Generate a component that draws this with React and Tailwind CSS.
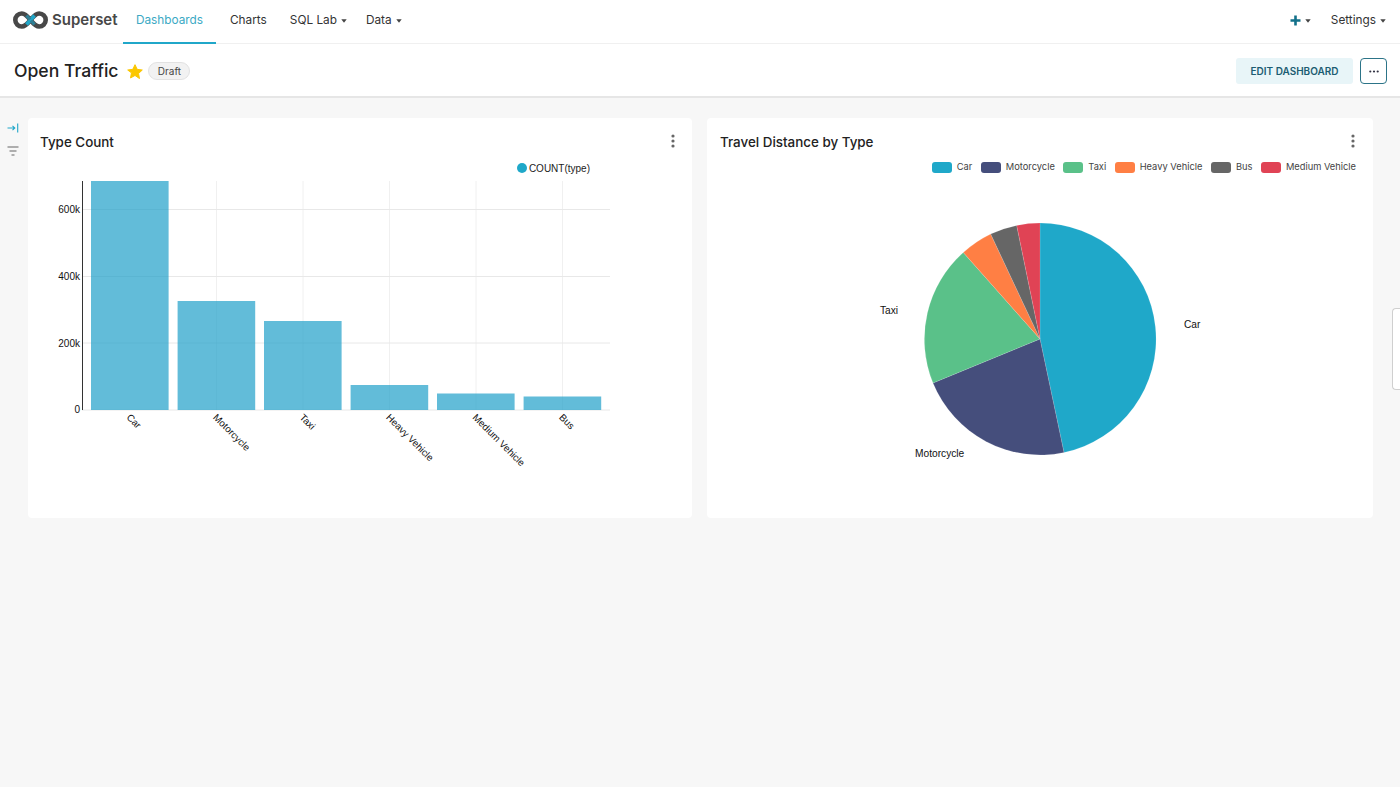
import React from "react";

const Caret = () => (
  <svg width="6" height="4" viewBox="0 0 6 4" className="ml-[4px] mt-[1px]">
    <path d="M0.3 0.3h5.4L3 3.700z" fill="#444" />
  </svg>
);

const Kebab = () => (
  <svg width="4" height="14" viewBox="0 0 4 14">
    <circle cx="2" cy="2" r="1.6" fill="#666" />
    <circle cx="2" cy="7" r="1.6" fill="#666" />
    <circle cx="2" cy="12" r="1.6" fill="#666" />
  </svg>
);

const Logo = () => (
  <svg className="-mt-[2px]" width="35" height="18" viewBox="0 0 35 18" fill="none">
    <path d="M17.500 9 C14 4.500 12 2.500 8.800 2.500 A6.500 6.500 0 0 0 8.800 15.500 C12 15.500 14 13.500 17.500 9 C21 4.500 23 2.500 26.200 2.500 A6.500 6.500 0 0 1 26.200 15.500 C23 15.500 21 13.500 17.500 9Z" stroke="#484848" strokeWidth="4.600" />
    <path d="M13.500 13.500 L21.500 4.500" stroke="#20a7c9" strokeWidth="3.800" />
    <path d="M13.500 4.500 L17 8.500" stroke="#2f7f95" strokeWidth="3.400" />
    <path d="M18 9.500 L21.500 13.500" stroke="#2f7f95" strokeWidth="3.400" />
  </svg>
);

const bars = [
  { name: "Car", x: 91, top: 181 },
  { name: "Motorcycle", x: 177.6, top: 301 },
  { name: "Taxi", x: 264, top: 321 },
  { name: "Heavy Vehicle", x: 350.6, top: 385 },
  { name: "Medium Vehicle", x: 437, top: 393.5 },
  { name: "Bus", x: 523.6, top: 396.5 },
];

const BarChart = () => (
  <svg viewBox="28 178 664 340" className="block w-[664px] h-[340px]">
    <g stroke="#e8e8e8" strokeWidth="1">
      {[216.5, 303, 389.5, 476, 562.5].map((x) => (
        <line key={x} x1={x} x2={x} y1="181" y2="410" stroke="#f0f0f0" />
      ))}
      {[209.5, 276.5, 343, 410].map((y) => (
        <line key={y} x1="82" x2="610" y1={y} y2={y} />
      ))}
    </g>
    {bars.map((b) => (
      <rect key={b.name} x={b.x} y={b.top} width="77.6" height={410 - b.top} fill="#1fa0c9" fillOpacity="0.7" />
    ))}
    <line x1="82.5" x2="82.5" y1="181" y2="410" stroke="#333" />
    <g fontFamily="'Liberation Sans', Arial, sans-serif" fontSize="10" fill="#111">
      {[["600k", 213], ["400k", 280], ["200k", 346.5], ["0", 413]].map(([t, y]) => (
        <text key={t} x="80" y={y} textAnchor="end">{t}</text>
      ))}
      {bars.map((b) => {
        const x = b.x + 35;
        return (
          <text key={b.name} x={x} y="418" fontSize="9.800" transform={`rotate(45 ${x} 418)`}>{b.name}</text>
        );
      })}
    </g>
  </svg>
);

const Slice = ({ d, fill }) => <path d={d} fill={fill} stroke="#ffffff" strokeOpacity="0.25" strokeWidth="0.5" />;

const PieChart = () => (
  <svg viewBox="707 178 666 340" className="block w-[666px] h-[340px]">
    <Slice d="M1040 339 L1040 223 A116 116 0 0 1 1064 452.5 Z" fill="#1fa8c9" />
    <Slice d="M1040 339 L1064 452.5 A116 116 0 0 1 933 383 Z" fill="#454e7c" />
    <Slice d="M1040 339 L933 383 A116 116 0 0 1 963.3 252.5 Z" fill="#5ac189" />
    <Slice d="M1040 339 L963.3 252.5 A116 116 0 0 1 990.7 234 Z" fill="#ff7f44" />
    <Slice d="M1040 339 L990.7 234 A116 116 0 0 1 1016.7 225.4 Z" fill="#666666" />
    <Slice d="M1040 339 L1016.7 225.4 A116 116 0 0 1 1040 223 Z" fill="#e04355" />
    <g fontFamily="'Liberation Sans', Arial, sans-serif" fontSize="10.2" fill="#111">
      <text x="1184" y="328">Car</text>
      <text x="880" y="313.500">Taxi</text>
      <text x="915" y="456.500">Motorcycle</text>
    </g>
  </svg>
);

const legend = [
  ["Car", "bg-[#1fa8c9]"],
  ["Motorcycle", "bg-[#454e7c]"],
  ["Taxi", "bg-[#5ac189]"],
  ["Heavy Vehicle", "bg-[#ff7f44]"],
  ["Bus", "bg-[#666666]"],
  ["Medium Vehicle", "bg-[#e04355]"],
];

export default function App() {
  return (
    <div className="w-[1400px] h-[787px] overflow-hidden relative bg-[#f7f7f7] text-[#333] font-['Inter','Liberation_Sans',sans-serif]">
      <header className="h-[44px] bg-white border-b border-[#f0f0f0] flex items-center text-[11.8px]">
        <div className="flex items-center pl-[13px] w-[123px] mb-[2px]">
          <Logo />
          <span className="ml-[4px] text-[15px] font-semibold text-[#484848]">Superset</span>
        </div>
        <a className="h-[44px] w-[93px] flex items-center justify-center border-b-2 border-[#20a7c9] text-[#3ba9c4]">Dashboards</a>
        <a className="ml-[14px] mb-[2px]">Charts</a>
        <a className="ml-[23px] mb-[2px] flex items-center">SQL Lab<Caret /></a>
        <a className="ml-[19px] mb-[2px] flex items-center">Data<Caret /></a>
        <div className="ml-auto mb-[2px] flex items-center pr-[14px]">
          <svg width="11" height="11" viewBox="0 0 11 11"><path d="M5.500 0.500v10M0.500 5.500h10" stroke="#13718a" strokeWidth="2.600" /></svg>
          <Caret />
          <span className="ml-[20px]">Settings</span>
          <Caret />
        </div>
      </header>

      <div className="h-[54px] bg-white border-b-2 border-[#e6e6e6] flex items-center pt-[2px] pl-[14px] pr-[13px]">
        <h1 className="text-[17.6px] leading-none font-medium text-[#222]">Open Traffic</h1>
        <svg className="ml-[9px]" width="16" height="15" viewBox="0 0 24 23">
          <path d="M12 1l3.400 7.200 7.800 1-5.800 5.400 1.500 7.800L12 17.600 5.100 21.400l1.500-7.800L.8 9.200l7.800-1z" fill="#fbc700" stroke="#fbc700" strokeWidth="1.500" strokeLinejoin="round" />
        </svg>
        <span className="ml-[5px] h-[18px] w-[42px] rounded-full bg-[#f2f2f2] border border-[#e2e2e2] flex items-center justify-center text-[10px] text-[#444]">Draft</span>
        <button className="ml-auto h-[26px] w-[117px] rounded-[3px] bg-[#e8f5f8] text-[10px] font-semibold text-[#1c5d72]">EDIT DASHBOARD</button>
        <button className="ml-[7px] h-[26px] w-[27px] rounded-[4px] border border-[#2c7488] flex items-center justify-center">
          <svg width="10" height="3" viewBox="0 0 10 3"><circle cx="1.300" cy="1.500" r="1.100" fill="#334" /><circle cx="5" cy="1.500" r="1.100" fill="#334" /><circle cx="8.700" cy="1.500" r="1.100" fill="#334" /></svg>
        </button>
      </div>

      <main className="flex pt-[20px]">
        <aside className="w-[28px] flex flex-col items-center pt-[5px] pr-[2px]">
          <svg width="12" height="10" viewBox="0 0 12 10" fill="none" stroke="#20a7c9" strokeWidth="1.100">
            <path d="M0.500 5h7M5.500 2.800L7.800 5 5.500 7.200M10.700 0.500v9" />
          </svg>
          <svg className="mt-[13px]" width="12" height="10" viewBox="0 0 12 10" fill="none" stroke="#666" strokeWidth="1.100">
            <path d="M0.500 1h11M2.500 5h7M4.500 9h3" />
          </svg>
        </aside>

        <section className="w-[664px] h-[400px] bg-white rounded-[4px] flex flex-col">
          <div className="h-[24px] mt-[11px] pl-[12px] pr-[17px] flex items-center justify-between">
            <h2 className="mt-[2px] text-[13.4px] font-medium text-[#222]">Type Count</h2>
            <Kebab />
          </div>
          <div className="h-[25px] pt-[5px] flex items-center justify-end pr-[102px] font-['Liberation_Sans',Arial,sans-serif] text-[10px] text-[#222]">
            <span className="w-[10px] h-[10px] rounded-full bg-[#1fa8c9] mr-[2px]"></span>
            COUNT(type)
          </div>
          <BarChart />
        </section>

        <section className="ml-[15px] w-[666px] h-[400px] bg-white rounded-[4px] flex flex-col">
          <div className="h-[24px] mt-[11px] pl-[13px] pr-[18px] flex items-center justify-between">
            <h2 className="mt-[2px] text-[13.4px] font-medium text-[#222]">Travel Distance by Type</h2>
            <Kebab />
          </div>
          <div className="h-[25px] flex items-start pt-[8px] justify-end gap-[8.5px] pr-[17px] text-[9.3px] text-[#444]">
            {legend.map(([t, c]) => (
              <span key={t} className="flex items-center gap-[5px] h-[12px]">
                <span className={`w-[20px] h-[11px] rounded-[3px] ${c}`}></span>
                {t}
              </span>
            ))}
          </div>
          <PieChart />
        </section>
      </main>

      <div className="absolute right-0 top-[308px] w-[8px] h-[82px] bg-white border border-r-0 border-[#cfcfcf] rounded-l-[4px]"></div>
    </div>
  );
}
